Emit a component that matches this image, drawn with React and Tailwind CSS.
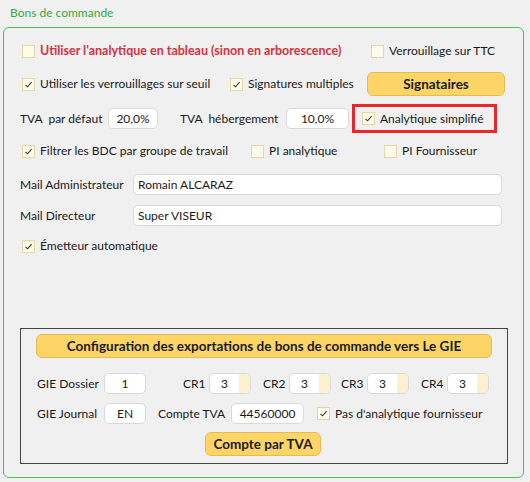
const Check = ({ checked }) => (
    <span className="w-[13px] h-[13px] shrink-0 border border-[#e6d6a6] bg-[#fffbea] flex items-center justify-center">
        {checked && (
            <svg width="9" height="9" viewBox="0 0 9 9">
                <path d="M1.5 4.8 L3.6 6.8 L7.6 2.2" fill="none" stroke="#333" strokeWidth="1.1" />
            </svg>
        )}
    </span>
);

const CheckItem = ({ checked, label, className = "" }) => (
    <div className={`flex items-center gap-[5px] ${className}`}>
        <Check checked={checked} />
        <span className="whitespace-nowrap">{label}</span>
    </div>
);

const Field = ({ value, className = "", center = true }) => (
    <div className={`h-[21px] bg-white border border-[#d9d9d9] rounded-[5px] flex items-center ${center ? "justify-center" : "px-[4px]"} ${className}`}>
        {value}
    </div>
);

const Spin = ({ value }) => (
    <div className="w-[42px] h-[21px] bg-white border border-[#d9d9d9] rounded-[5px] flex overflow-hidden">
        <span className="flex-1 flex items-center justify-center">{value}</span>
        <span className="w-[11px] bg-[#fdf0cf]"></span>
    </div>
);

const YellowButton = ({ children, className = "" }) => (
    <div className={`bg-[#fcd566] border border-[#e2bb55] rounded-[6px] flex items-center justify-center font-bold text-[13.5px] text-[#1a1a1a] ${className}`}>
        {children}
    </div>
);

export default function App() {
    return (
        <div className="w-[530px] h-[482px] bg-[#f0f0f0] text-[12px] text-[#1a1a1a] overflow-hidden" style={{ fontFamily: "Lato, sans-serif" }}>
            <div className="h-[27px] pl-[10px] pt-[4px] text-[#34ab3c]">Bons de commande</div>
            <div className="ml-[3px] w-[521px] h-[451px] border border-[#4cc14c] rounded-[6px]">
                {/* row 1 */}
                <div className="mt-[13px] h-[20px] flex items-center pl-[18px]">
                    <CheckItem className="w-[349px] text-[#d9303d] font-bold text-[12.5px]" label="Utiliser l'analytique en tableau (sinon en arborescence)" />
                    <CheckItem label="Verrouillage sur TTC" />
                </div>
                {/* row 2 */}
                <div className="mt-[11px] h-[24px] flex items-center pl-[18px]">
                    <CheckItem className="w-[208px]" checked label="Utiliser les verrouillages sur seuil" />
                    <CheckItem className="w-[137px]" checked label="Signatures multiples" />
                    <YellowButton className="w-[138px] h-[24px]">Signataires</YellowButton>
                </div>
                {/* row 3 */}
                <div className="mt-[8px] h-[29px] flex items-center pl-[16px]">
                    <span className="w-[88px] whitespace-nowrap">TVA&nbsp; par défaut</span>
                    <Field className="w-[50px]" value="20,0%" />
                    <span className="ml-[22px] w-[106px] whitespace-nowrap">TVA&nbsp; hébergement</span>
                    <Field className="w-[63px]" value="10,0%" />
                    <div className="ml-[3px] w-[145px] h-[29px] border-[3px] border-[#e8262b] flex items-center pl-[7px]">
                        <CheckItem checked label="Analytique simplifié" />
                    </div>
                </div>
                {/* row 4 */}
                <div className="mt-[8px] h-[20px] flex items-center pl-[18px]">
                    <CheckItem className="w-[229px]" checked label="Filtrer les BDC par groupe de travail" />
                    <CheckItem className="w-[133px]" label="PI analytique" />
                    <CheckItem label="PI Fournisseur" />
                </div>
                {/* mails */}
                <div className="mt-[13px] h-[21px] flex items-center pl-[16px]">
                    <span className="w-[113px] whitespace-nowrap">Mail Administrateur</span>
                    <Field className="w-[369px]" center={false} value="Romain ALCARAZ" />
                </div>
                <div className="mt-[10px] h-[21px] flex items-center pl-[16px]">
                    <span className="w-[113px] whitespace-nowrap">Mail Directeur</span>
                    <Field className="w-[369px]" center={false} value="Super VISEUR" />
                </div>
                <div className="mt-[10px] h-[20px] flex items-center pl-[18px]">
                    <CheckItem checked label="Émetteur automatique" />
                </div>
                {/* export box */}
                <div className="mt-[72px] ml-[16px] w-[488px] h-[136px] border border-[#444] pt-[5px] pl-[15px]">
                    <YellowButton className="w-[456px] h-[24px]">Configuration des exportations de bons de commande vers Le GIE</YellowButton>
                    <div className="mt-[15px] h-[21px] flex items-center pl-[1px]">
                        <span className="w-[67px] whitespace-nowrap">GIE Dossier</span>
                        <Field className="w-[42px]" value="1" />
                        <span className="ml-[37px] w-[26px] whitespace-nowrap">CR1</span>
                        <Spin value="3" />
                        <span className="ml-[12px] w-[26px] whitespace-nowrap">CR2</span>
                        <Spin value="3" />
                        <span className="ml-[10px] w-[26px] whitespace-nowrap">CR3</span>
                        <Spin value="3" />
                        <span className="ml-[12px] w-[26px] whitespace-nowrap">CR4</span>
                        <Spin value="3" />
                    </div>
                    <div className="mt-[9px] h-[21px] flex items-center pl-[1px]">
                        <span className="w-[67px] whitespace-nowrap">GIE Journal</span>
                        <Field className="w-[42px]" value="EN" />
                        <span className="ml-[12px] w-[73px] whitespace-nowrap">Compte TVA</span>
                        <Field className="w-[73px]" value="44560000" />
                        <CheckItem className="ml-[13px]" checked label="Pas d'analytique fournisseur" />
                    </div>
                    <div className="mt-[8px] flex pl-[169px]">
                        <YellowButton className="w-[116px] h-[24px]">Compte par TVA</YellowButton>
                    </div>
                </div>
            </div>
        </div>
    );
}
